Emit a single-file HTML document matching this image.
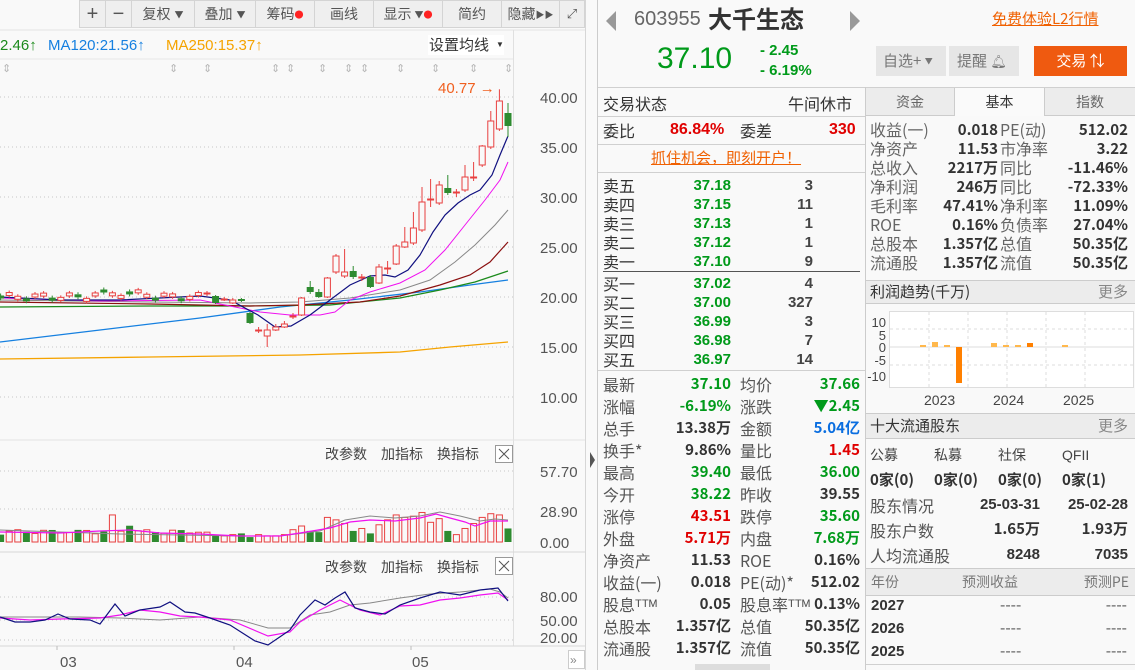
<!DOCTYPE html>
<html><head><meta charset="utf-8">
<style>
*{margin:0;padding:0;box-sizing:border-box}
body{width:1135px;height:670px;overflow:hidden;background:#f9f9f9;font-family:"Liberation Sans","Noto Sans CJK SC",sans-serif;color:#333;position:relative}
.a{position:absolute;white-space:nowrap;line-height:1.25}
.cn{font-family:"Noto Sans CJK SC","Liberation Sans",sans-serif}
.tb{position:absolute;top:0;height:28px;border:1px solid #d4d4d4;background:#efefef;font-size:14px;color:#555;display:flex;align-items:center;justify-content:center}
.g{color:#009a1a}.r{color:#e00000}.b{color:#0a6ee0}.o{color:#f06000}
.nb{font-weight:bold}
.hl{position:absolute;height:1px;background:#d0d0d0}
</style></head><body>
<!-- toolbar -->
<div class="tb" style="left:79px;width:27px;font-size:20px">+</div>
<div class="tb" style="left:105px;width:27px;font-size:20px">−</div>
<div class="tb cn" style="left:131px;width:64px">复权 <span style="font-size:9px;margin-left:4px">▼</span></div>
<div class="tb cn" style="left:194px;width:62px">叠加 <span style="font-size:9px;margin-left:4px">▼</span></div>
<div class="tb cn" style="left:255px;width:60px">筹码<span style="color:#f22;font-size:9px;vertical-align:top">●</span></div>
<div class="tb cn" style="left:314px;width:60px">画线</div>
<div class="tb cn" style="left:373px;width:70px">显示 <span style="font-size:9px;margin-left:3px">▼</span><span style="color:#f22;font-size:9px;vertical-align:top">●</span></div>
<div class="tb cn" style="left:442px;width:60px">简约</div>
<div class="tb cn" style="left:501px;width:59px">隐藏 <span style="font-size:9px">▶▶</span></div>
<div class="tb" style="left:559px;width:26px;font-size:13px">⤢</div>

<svg class="a" style="left:0;top:0" width="598" height="670" id="chart">
<line x1="0" y1="30" x2="585" y2="30" stroke="#e3e3e3"/>
<line x1="0" y1="59" x2="513" y2="59" stroke="#e8e8e8"/>
<text x="0" y="50" font-size="15" fill="#1b8a1b">2.46↑</text>
<text x="48" y="50" font-size="15" fill="#1680e0">MA120:21.56↑</text>
<text x="166" y="50" font-size="15" fill="#f5a300">MA250:15.37↑</text>
<rect x="428" y="35" width="76" height="20" fill="#fff"/>
<text x="429" y="50" font-size="15" fill="#333" class="cn">设置均线</text><text x="496" y="47" font-size="8" fill="#333">▼</text>
<g fill="#b8b8b8" font-size="11" id="marks"></g>
<g stroke="#c8c8c8" stroke-dasharray="1,3">
<line x1="0" y1="97" x2="513" y2="97"/><line x1="0" y1="147" x2="513" y2="147"/><line x1="0" y1="197" x2="513" y2="197"/><line x1="0" y1="247" x2="513" y2="247"/><line x1="0" y1="297" x2="513" y2="297"/><line x1="0" y1="347" x2="513" y2="347"/><line x1="0" y1="397" x2="513" y2="397"/>
<line x1="0" y1="471" x2="513" y2="471"/><line x1="0" y1="509" x2="513" y2="509"/><line x1="0" y1="597" x2="513" y2="597"/><line x1="0" y1="620" x2="513" y2="620"/><line x1="0" y1="640" x2="513" y2="640"/>
</g>
<line x1="513.5" y1="30" x2="513.5" y2="646" stroke="#e0e0e0"/>
<line x1="585.5" y1="0" x2="585.5" y2="670" stroke="#d6d6d6"/>
<g font-size="15" fill="#555">
<text x="540" y="103">40.00</text><text x="540" y="153">35.00</text><text x="540" y="203">30.00</text><text x="540" y="253">25.00</text><text x="540" y="303">20.00</text><text x="540" y="353">15.00</text><text x="540" y="403">10.00</text>
<text x="540" y="477">57.70</text><text x="540" y="517">28.90</text><text x="540" y="548">0.00</text>
<text x="540" y="602">80.00</text><text x="540" y="626">50.00</text><text x="540" y="643">20.00</text>
<text x="60" y="667">03</text><text x="236" y="667">04</text><text x="412" y="667">05</text>
</g>
<text x="438" y="93" font-size="15" fill="#f06020">40.77 →</text>
<line x1="0" y1="440" x2="585" y2="440" stroke="#e3e3e3"/>
<line x1="0" y1="552" x2="585" y2="552" stroke="#d8d8d8"/>
<line x1="0" y1="646" x2="585" y2="646" stroke="#d8d8d8"/>
<g class="cn" font-size="14" fill="#444">
<text x="325" y="459">改参数</text><text x="381" y="459">加指标</text><text x="437" y="459">换指标</text>
<text x="325" y="572">改参数</text><text x="381" y="572">加指标</text><text x="437" y="572">换指标</text>
</g>
<rect x="495.5" y="445.5" width="17" height="17" fill="#fff" stroke="#999"/><path d="M499 449l10 10M509 449l-10 10" stroke="#555"/>
<rect x="495.5" y="557.5" width="17" height="17" fill="#fff" stroke="#999"/><path d="M499 561l10 10M509 561l-10 10" stroke="#555"/>
<line x1="57" y1="646" x2="57" y2="650" stroke="#bbb"/><line x1="234" y1="646" x2="234" y2="650" stroke="#bbb"/><line x1="411" y1="646" x2="411" y2="650" stroke="#bbb"/>
<rect x="568.5" y="650.5" width="16" height="18" fill="#fff" stroke="#ccc"/><text x="570" y="664" font-size="12" fill="#888">»</text>
<path d="M590 452l5 8-5 8z" fill="#555"/>
<g id="ma"></g><g id="cdl"></g><g id="vol"></g><g id="kd"></g>
</svg>

<!-- right panel -->
<div class="a" style="left:597px;top:0;width:1px;height:670px;background:#ccc"></div>
<svg class="a" style="left:604px;top:10px" width="14" height="22"><path d="M12 1L2 11l10 10z" fill="#999"/></svg>
<div class="a" style="left:634px;top:7px;font-size:20px;color:#666">603955</div>
<div class="a cn" style="left:708px;top:3px;font-size:24px;font-weight:bold;color:#333">大千生态</div>
<svg class="a" style="left:848px;top:10px" width="14" height="22"><path d="M2 1l10 10L2 21z" fill="#999"/></svg>
<div class="a cn o" style="left:992px;top:10px;font-size:15px;text-decoration:underline">免费体验L2行情</div>
<div class="a g" style="left:657px;top:40px;font-size:30px">37.10</div>
<div class="a g nb" style="left:760px;top:42px;font-size:15px">- 2.45</div>
<div class="a g nb" style="left:760px;top:62px;font-size:15px">- 6.19%</div>
<div class="a cn" style="left:876px;top:46px;width:70px;height:30px;background:#e6e6e6;color:#777;font-size:15px;line-height:30px;padding-left:7px">自选+ <span style="font-size:8px;vertical-align:middle">▼</span></div>
<div class="a cn" style="left:949px;top:46px;width:70px;height:30px;background:#e6e6e6;color:#777;font-size:15px;line-height:30px;padding-left:8px">提醒 <span style="font-size:13px">🔔︎</span></div>
<div class="a cn" style="left:1034px;top:46px;width:93px;height:30px;background:#ef5a10;color:#fff;font-size:15px;line-height:30px;text-align:center">交易 ⇅</div>
<div class="hl" style="left:598px;top:87px;width:537px"></div>
<div class="a" style="left:865px;top:87px;width:1px;height:583px;background:#ccc"></div>

<!-- left sub panel -->
<div class="a cn" style="left:603px;top:92px;font-size:16px;line-height:22px">交易状态</div>
<div class="a cn" style="left:788px;top:92px;font-size:16px;line-height:22px">午间休市</div>
<div class="hl" style="left:598px;top:116px;width:267px"></div>
<div class="a cn" style="left:603px;top:119px;font-size:16px;line-height:22px">委比</div>
<div class="a r nb" style="left:670px;top:119px;font-size:16px;line-height:22px">86.84%</div>
<div class="a cn" style="left:740px;top:119px;font-size:16px;line-height:22px">委差</div>
<div class="a r nb" style="left:829px;top:119px;font-size:16px;line-height:22px">330</div>
<div class="hl" style="left:598px;top:144px;width:267px"></div>
<div class="a cn o" style="left:651px;top:149px;font-size:15px;text-decoration:underline">抓住机会，即刻开户！</div>
<div class="hl" style="left:598px;top:172px;width:267px"></div>
<div id="ob"></div>
<div class="a" style="left:603px;top:271px;width:257px;height:1px;background:#555"></div>
<div class="hl" style="left:598px;top:370px;width:267px"></div>
<div id="st"></div>
<div class="a" style="left:695px;top:664px;width:75px;height:6px;background:#ddd"></div>

<!-- right sub panel -->
<div class="a cn" style="left:866px;top:88px;width:89px;height:28px;background:#ececec;color:#666;font-size:14px;text-align:center;line-height:28px;border-right:1px solid #ccc;border-bottom:1px solid #ccc">资金</div>
<div class="a cn" style="left:955px;top:88px;width:90px;height:28px;background:#fafafa;color:#333;font-size:14px;text-align:center;line-height:28px;border-right:1px solid #ccc">基本</div>
<div class="a cn" style="left:1045px;top:88px;width:90px;height:28px;background:#ececec;color:#666;font-size:14px;text-align:center;line-height:28px;border-bottom:1px solid #ccc">指数</div>
<div id="fd"></div>
<div class="a cn" style="left:866px;top:280px;width:269px;height:24px;background:#ececec;border-top:1px solid #ccc;border-bottom:1px solid #ccc;font-size:15px;line-height:22px;padding-left:4px">利润趋势(千万)<span style="position:absolute;right:7px;color:#888">更多</span></div>
<svg class="a" style="left:866px;top:305px" width="269" height="108">
<rect x="23.5" y="6.5" width="244" height="76" fill="#fff" stroke="#ddd"/>
<g stroke="#ddd" stroke-dasharray="3,3"><line x1="24" y1="24" x2="267" y2="24"/><line x1="24" y1="60" x2="267" y2="60"/><line x1="63" y1="7" x2="63" y2="82"/><line x1="102" y1="7" x2="102" y2="82"/><line x1="141" y1="7" x2="141" y2="82"/><line x1="180" y1="7" x2="180" y2="82"/><line x1="219" y1="7" x2="219" y2="82"/></g>
<line x1="24" y1="42" x2="267" y2="42" stroke="#ddd"/>
<g font-size="13" fill="#444" text-anchor="end"><text x="20" y="22">10</text><text x="20" y="35">5</text><text x="20" y="47">0</text><text x="20" y="60">-5</text><text x="20" y="76">-10</text></g>
<g fill="#ffb84d"><rect x="54" y="40" width="6" height="2"/><rect x="66" y="37" width="6" height="5"/><rect x="78" y="40" width="6" height="2"/><rect x="125" y="38" width="6" height="4"/><rect x="137" y="40" width="6" height="2"/><rect x="149" y="40" width="6" height="2"/><rect x="196" y="40" width="6" height="2"/></g>
<g fill="#ff8000"><rect x="90" y="42" width="6" height="36"/><rect x="161" y="38" width="6" height="4"/></g>
<g font-size="14" fill="#444"><text x="58" y="100">2023</text><text x="127" y="100">2024</text><text x="197" y="100">2025</text></g>
</svg>
<div class="a cn" style="left:866px;top:413px;width:269px;height:26px;background:#ececec;border-top:1px solid #ccc;border-bottom:1px solid #ccc;font-size:15px;line-height:24px;padding-left:4px">十大流通股东<span style="position:absolute;right:7px;color:#888">更多</span></div>
<div class="a cn" style="left:870px;top:447px;font-size:14px;color:#444">公募</div>
<div class="a cn" style="left:934px;top:447px;font-size:14px;color:#444">私募</div>
<div class="a cn" style="left:998px;top:447px;font-size:14px;color:#444">社保</div>
<div class="a" style="left:1062px;top:447px;font-size:14px;color:#444">QFII</div>
<div class="a cn nb" style="left:870px;top:471px;font-size:15px">0家(0)</div>
<div class="a cn nb" style="left:934px;top:471px;font-size:15px">0家(0)</div>
<div class="a cn nb" style="left:998px;top:471px;font-size:15px">0家(0)</div>
<div class="a cn nb" style="left:1062px;top:471px;font-size:15px">0家(1)</div>
<div class="a cn" style="left:870px;top:495px;font-size:16px;color:#555">股东情况</div>
<div class="a nb" style="right:95px;top:496px;font-size:15px">25-03-31</div>
<div class="a nb" style="right:7px;top:496px;font-size:15px">25-02-28</div>
<div class="a cn" style="left:870px;top:520px;font-size:16px;color:#555">股东户数</div>
<div class="a cn nb" style="right:95px;top:520px;font-size:15px">1.65万</div>
<div class="a cn nb" style="right:7px;top:520px;font-size:15px">1.93万</div>
<div class="a cn" style="left:870px;top:545px;font-size:16px;color:#555">人均流通股</div>
<div class="a nb" style="right:95px;top:546px;font-size:15px">8248</div>
<div class="a nb" style="right:7px;top:546px;font-size:15px">7035</div>
<div class="a cn" style="left:866px;top:568px;width:269px;height:28px;background:#ececec;border-top:1px solid #ccc;border-bottom:1px solid #ccc;font-size:14px;line-height:26px;color:#777"><span style="position:absolute;left:5px">年份</span><span style="position:absolute;left:96px">预测收益</span><span style="position:absolute;right:6px">预测PE</span></div>
<div class="a nb" style="left:871px;top:597px;font-size:15px">2027</div><div class="a" style="left:1000px;top:596px;color:#666">----</div><div class="a" style="right:8px;top:596px;color:#666">----</div>
<div class="a nb" style="left:871px;top:620px;font-size:15px">2026</div><div class="a" style="left:1000px;top:619px;color:#666">----</div><div class="a" style="right:8px;top:619px;color:#666">----</div>
<div class="a nb" style="left:871px;top:643px;font-size:15px">2025</div><div class="a" style="left:1000px;top:642px;color:#666">----</div><div class="a" style="right:8px;top:642px;color:#666">----</div>
<div class="hl" style="left:866px;top:664px;width:269px"></div>

<script>
function h(id,s){document.getElementById(id).innerHTML=s}
var ob=[["卖五","37.18","3"],["卖四","37.15","11"],["卖三","37.13","1"],["卖二","37.12","1"],["卖一","37.10","9"],["买一","37.02","4"],["买二","37.00","327"],["买三","36.99","3"],["买四","36.98","7"],["买五","36.97","14"]];
var s="";ob.forEach(function(r,i){var y=i<5?176+i*19:274+(i-5)*19;
s+='<div class="a cn" style="left:603px;top:'+y+'px;font-size:16px;line-height:19px">'+r[0]+'</div><div class="a g nb" style="right:404px;top:'+y+'px;font-size:15px;line-height:19px">'+r[1]+'</div><div class="a nb" style="right:322px;top:'+y+'px;font-size:15px;line-height:19px;color:#444">'+r[2]+'</div>'});h("ob",s);
var st=[["最新","37.10","g","均价","37.66","g"],["涨幅","-6.19%","g","涨跌","▼2.45","g"],["总手","13.38万","","金额","5.04亿","b"],["换手*","9.86%","","量比","1.45","r"],["最高","39.40","g","最低","36.00","g"],["今开","38.22","g","昨收","39.55",""],["涨停","43.51","r","跌停","35.60","g"],["外盘","5.71万","r","内盘","7.68万","g"],["净资产","11.53","","ROE","0.16%",""],["收益(一)","0.018","","PE(动)*","512.02",""],["股息ᵀᵀᴹ","0.05","","股息率ᵀᵀᴹ","0.13%",""],["总股本","1.357亿","","总值","50.35亿",""],["流通股","1.357亿","","流值","50.35亿",""]];
s="";st.forEach(function(r,i){var y=373+i*22;
s+='<div class="a cn" style="left:603px;top:'+y+'px;font-size:16px;line-height:22px;color:#555">'+r[0]+'</div><div class="a cn nb '+r[2]+'" style="right:404px;top:'+y+'px;font-size:15px;line-height:22px">'+r[1]+'</div><div class="a cn" style="left:740px;top:'+y+'px;font-size:16px;line-height:22px;color:#555">'+r[3]+'</div><div class="a cn nb '+r[5]+'" style="right:275px;top:'+y+'px;font-size:15px;line-height:22px">'+r[4]+'</div>'});h("st",s);
var fd=[["收益(一)","0.018","PE(动)","512.02"],["净资产","11.53","市净率","3.22"],["总收入","2217万","同比","-11.46%"],["净利润","246万","同比","-72.33%"],["毛利率","47.41%","净利率","11.09%"],["ROE","0.16%","负债率","27.04%"],["总股本","1.357亿","总值","50.35亿"],["流通股","1.357亿","流值","50.35亿"]];
s="";fd.forEach(function(r,i){var y=120+i*19;
s+='<div class="a cn" style="left:870px;top:'+y+'px;font-size:16px;line-height:19px;color:#666">'+r[0]+'</div><div class="a cn nb" style="right:137px;top:'+y+'px;font-size:15px;line-height:19px">'+r[1]+'</div><div class="a cn" style="left:1000px;top:'+y+'px;font-size:16px;line-height:19px;color:#666">'+r[2]+'</div><div class="a cn nb" style="right:7px;top:'+y+'px;font-size:15px;line-height:19px">'+r[3]+'</div>'});h("fd",s);
function Y(p){return 497-10*p}
var late=[[20.3,20.4,20.6,20.1],[20.1,19.4,20.2,19.3],[19.8,19.8,20.0,19.6],[19.4,19.7,19.9,19.3],[19.8,19.6,19.9,19.5],[18.4,17.4,18.5,17.3],[16.7,16.7,17.0,16.4],[16.1,16.7,17.3,15.0],[16.7,17.0,17.3,16.6],[17.0,17.3,17.6,16.9],[18.1,18.1,18.4,17.8],[18.2,19.9,20.0,18.1],[21.0,20.5,21.6,20.3],[20.5,20.0,20.8,19.9],[20.0,21.9,22.0,19.9],[22.5,24.1,24.3,22.3],[22.1,22.5,24.8,21.9],[22.6,22.0,23.1,21.8],[22.0,22.0,22.3,21.6],[22.0,21.0,22.2,20.9],[21.4,23.0,23.3,21.3],[22.9,22.9,23.6,22.3],[23.3,25.1,25.3,23.2],[25.0,25.5,27.0,24.9],[25.4,26.9,28.5,25.2],[26.7,29.5,31.0,26.5],[29.8,29.8,31.8,29.0],[29.4,31.2,31.6,29.2],[30.9,30.4,32.2,30.2],[30.4,30.5,30.8,30.0],[30.7,32.0,33.2,30.5],[32.0,32.0,33.5,31.6],[33.2,35.1,35.2,33.0],[35.0,37.6,38.6,34.8],[36.8,39.6,40.77,36.6],[38.4,37.1,39.4,36.0]];
var data=[];var n0=24,i;
for(i=0;i<n0;i++){var b=20+0.3*Math.sin(i*1.7)+(i>10&&i<18?0.3:0);var up=(i*7)%3!=0;var o=up?b-0.15:b+0.15,c=up?b+0.15:b-0.15;data.push([o,c,Math.max(o,c)+0.2,Math.min(o,c)-0.2])}
data=data.concat(late);var N=data.length;
function X(i){return 508-(N-1-i)*8.6}
var vols=[];
for(i=0;i<N;i++){vols.push(i<n0?(6+4*Math.abs(Math.sin(i*2.3))+(i==13?12:0)+(i==15?7:0)):0)}
var lv=[8,6,5,6,7,4,6,5,5,6,10,13,9,8,20,18,15,9,11,7,14,18,22,20,21,24,16,19,9,6,11,15,20,23,22,11];
for(i=0;i<lv.length;i++)vols[n0+i]=lv[i];
var s2='';
data.forEach(function(d,i){var x=X(i),up=d[1]>=d[0],col=up?'#e84040':'#2e8b30';
var t=Y(Math.max(d[0],d[1])),bt=Y(Math.min(d[0],d[1]));if(bt-t<1)bt=t+1;
s2+='<line x1="'+x+'" y1="'+Y(d[2])+'" x2="'+x+'" y2="'+t+'" stroke="'+col+'"/><line x1="'+x+'" y1="'+bt+'" x2="'+x+'" y2="'+Y(d[3])+'" stroke="'+col+'"/>';
s2+=up?'<rect x="'+(x-3)+'" y="'+t+'" width="6" height="'+(bt-t)+'" fill="#f9f9f9" stroke="'+col+'"/>':'<rect x="'+(x-3.5)+'" y="'+t+'" width="7" height="'+(bt-t)+'" fill="'+col+'"/>';
var vh=vols[i]*1.23;var vy=542-vh;
s2+=up?'<rect x="'+(x-3)+'" y="'+vy+'" width="6" height="'+vh+'" fill="#f9f9f9" stroke="#e84040"/>':'<rect x="'+(x-3.5)+'" y="'+vy+'" width="7" height="'+vh+'" fill="#2e8b30"/>';
});
h('cdl',s2);
function pl(pts,c,w){return '<polyline points="'+pts+'" fill="none" stroke="'+c+'" stroke-width="'+(w||1)+'"/>'}
var ma='';
ma+=pl("0,359 150,357 300,355 400,352 450,347 508,342","#f5a300",1.3);
ma+=pl("0,342 100,330 200,318 280,307 350,300 420,292 470,285 508,280","#1680e0",1.3);
ma+=pl("0,307 150,306 250,306 330,305 400,298 440,290 475,282 508,271","#1b8a1b",1.2);
ma+=pl("0,302 150,304 250,306 300,305 360,302 400,296 440,285 470,275 490,262 508,242","#8b1010",1.2);
ma+=pl("0,300 150,302 250,303 300,302 350,298 400,290 430,280 455,262 475,245 495,225 508,210","#888",1);
ma+=pl("0,298 100,301 200,300 230,306 260,312 290,315 320,315 335,312 350,300 370,292 400,283 425,270 445,250 465,225 485,200 500,180 508,162","#f010f0",1);
ma+=pl("0,297 60,300 120,300 200,296 230,300 258,315 275,327 291,326 310,315 330,300 350,285 370,276 385,275 395,277 408,270 420,255 433,232 445,215 458,203 470,195 480,190 492,175 500,155 508,136","#101080",1.2);
h('ma',ma);
var vm='';
vm+=pl("0,530 60,532 120,534 180,535 240,536 280,536 320,531 345,520 370,516 395,518 420,516 440,512 460,516 480,521 495,519 508,520","#888",1);
vm+=pl("0,532 60,533 100,531 130,530 160,533 200,534 240,536 280,536 300,533 330,528 350,522 370,520 395,521 420,518 436,514 450,518 465,522 475,526 490,521 508,521","#f010f0",1.2);
h('vol',vm);
var kd='';
kd+=pl("0,617 40,617 80,617 120,618 160,620 200,617 240,620 268,628 290,628 310,615 330,612 350,605 370,603 400,598 430,594 460,592 490,589 500,592 508,598","#888",1);
kd+=pl("0,618 30,620 60,619 100,618 120,615 140,610 160,612 180,616 200,617 230,620 268,636 290,632 300,622 320,610 340,600 360,610 380,615 400,606 420,605 440,600 460,598 480,595 498,593 508,600","#f010f0",1.2);
kd+=pl("0,617 15,622 30,622 45,620 58,614 70,619 90,620 100,624 115,604 125,616 140,610 160,607 170,602 185,612 195,613 210,618 230,625 255,641 268,645 290,630 300,615 315,600 325,605 335,598 345,592 355,608 370,612 385,614 400,605 420,598 440,592 460,595 480,590 498,588 508,601","#101080",1.2);
h('kd',kd);
var mk='';[6,173,207,275,290,322,348,364,400,435,473,508].forEach(function(x){mk+='<text x="'+(x-4)+'" y="72">⇕</text>'});
h('marks',mk);
</script>
</body></html>
